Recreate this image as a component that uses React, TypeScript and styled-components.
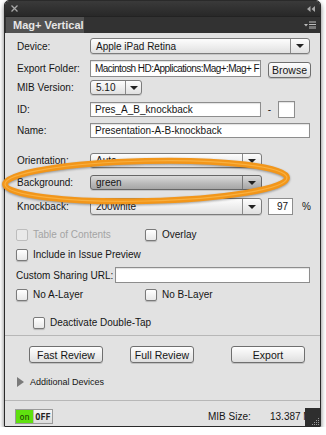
import React from 'react';
import styled, { createGlobalStyle } from 'styled-components';

const Global = createGlobalStyle`
    html, body {
        margin: 0;
        background: #fff;
    }
    body {
        font-family: "Liberation Sans", Arial, sans-serif;
        font-size: 10px;
        color: #151515;
    }
`;

export default () => {
    return <>
        <Global />
        <Panel>
            <TitleBar>
                <svg width="7" height="7" viewBox="0 0 7 7">
                    <path d="M0.5 0.5 L6.5 6.5 M6.5 0.5 L0.5 6.5" stroke="#a8a8a8" strokeWidth="1.3" />
                </svg>
                <svg width="8" height="6" viewBox="0 0 8 6">
                    <path d="M3.5 0 L0 3 L3.5 6 Z M8 0 L4.5 3 L8 6 Z" fill="#a8a8a8" />
                </svg>
            </TitleBar>
            <TabBar>
                <Tab>Mag+ Vertical</Tab>
                <svg width="12" height="8" viewBox="0 0 12 8">
                    <path d="M0 3 L4 3 L2 5.5 Z" fill="#bdbdbd" />
                    <path d="M5 1 H12 M5 3.5 H12 M5 6 H12 M5 8 H12" stroke="#bdbdbd" strokeWidth="1" />
                </svg>
            </TabBar>

            <Body>
                <Row $mt={0} $h={16}>
                    <Label>Device:</Label>
                    <Select value="Apple iPad Retina" />
                </Row>
                <Row $mt={4} $h={20}>
                    <Label>Export Folder:</Label>
                    <Inline>
                        <Field $w={171} $h={17} $tight>Macintosh HD:Applications:Mag+:Mag+ F</Field>
                        <Button $w={43} $self="flex-end" $push={7}>Browse</Button>
                    </Inline>
                </Row>
                <Row $mt={2} $h={15}>
                    <Label>MIB Version:</Label>
                    <Select value="5.10" width={52} arrow={15} />
                </Row>
                <Row $mt={6} $h={17}>
                    <Label>ID:</Label>
                    <Inline>
                        <Field $w={171} $h={15}>Pres_A_B_knockback</Field>
                        <Dash>-</Dash>
                        <Field $w={17} $h={17} />
                    </Inline>
                </Row>
                <Row $mt={4} $h={16}>
                    <Label>Name:</Label>
                    <Field $h={15}>Presentation-A-B-knockback</Field>
                </Row>

                <Row $mt={15} $h={15}>
                    <Label>Orientation:</Label>
                    <Select value="Auto" width={172} />
                </Row>
                <Row $mt={7} $h={15}>
                    <Label>Background:</Label>
                    <Select value="green" width={172} active />
                </Row>
                <Row $mt={8} $h={15}>
                    <Label>Knockback:</Label>
                    <Inline>
                        <Select value="200white" width={172} />
                        <Percent>97</Percent>
                        <Unit>%</Unit>
                    </Inline>
                </Row>

                <CheckRow $mt={15}>
                    <Check label="Table of Contents" disabled />
                    <Check label="Overlay" />
                </CheckRow>
                <CheckRow $mt={7}>
                    <Check label="Include in Issue Preview" />
                </CheckRow>
                <UrlRow>
                    <span>Custom Sharing URL:</span>
                    <Field $h={16} />
                </UrlRow>
                <CheckRow $mt={5}>
                    <Check label="No A-Layer" />
                    <Check label="No B-Layer" />
                </CheckRow>
                <CheckRow $mt={15} $indent={17}>
                    <Check label="Deactivate Double-Tap" />
                </CheckRow>

                <Divider $mt={6} />

                <ButtonRow>
                    <Button $w={74} $h={17}>Fast Review</Button>
                    <Button $w={64} $h={17}>Full Review</Button>
                    <Button $w={74} $h={17} $push={10}>Export</Button>
                </ButtonRow>

                <Disclosure>
                    <Triangle />
                    Additional Devices
                </Disclosure>

                <Divider $mt={11} />

                <Footer>
                    <Toggle>
                        <On>on</On>
                        <Off>OFF</Off>
                    </Toggle>
                    <span />
                    <span>MIB Size:</span>
                    <SizeValue>13.387 MB</SizeValue>
                </Footer>
            </Body>

            <Grip>
                <svg width="10" height="10" viewBox="0 0 10 10">
                    {[[8, 2], [6, 4], [8, 4], [4, 6], [6, 6], [8, 6], [2, 8], [4, 8], [6, 8], [8, 8]].map(([x, y]) =>
                        <rect key={`${x}-${y}`} x={x} y={y} width="1" height="1" fill="#9a9a9a" />
                    )}
                </svg>
            </Grip>

            <Highlight viewBox="0 0 326 435">
                <ellipse cx="146" cy="181" rx="141" ry="20" transform="rotate(-1.3 146 181)"
                    fill="none" stroke="#f2961a" strokeWidth="6" />
                <ellipse cx="146" cy="181" rx="141" ry="20" transform="rotate(-1.3 146 181)"
                    fill="none" stroke="#f8b040" strokeWidth="1.2" />
            </Highlight>
        </Panel>
    </>;
}

const Select = ({ value, width, arrow = 18, active = false }:
    { value: string; width?: number; arrow?: number; active?: boolean }) =>
    <SelectBox $w={width} $active={active}>
        <SelectValue>{value}</SelectValue>
        <SelectArrow $w={arrow} $active={active}><Caret /></SelectArrow>
    </SelectBox>;

const Check = ({ label, disabled = false }: { label: string; disabled?: boolean }) =>
    <CheckItem $disabled={disabled}>
        <Box $disabled={disabled} />
        {label}
    </CheckItem>;

const Panel = styled.div`
    position: relative;
    margin-left: 4px;
    width: 317px;
    height: 427px;
    box-sizing: border-box;
    border: 1px solid #2a2a2a;
    border-radius: 5px 5px 1px 1px;
    box-shadow: 0 3px 5px rgba(0, 0, 0, 0.55);
    display: flex;
    flex-direction: column;
    background: #e2e2e2;
`;

const TitleBar = styled.div`
    height: 15px;
    display: flex;
    align-items: center;
    justify-content: space-between;
    padding: 0 5px 0 6px;
    background: linear-gradient(#3a3a3a, #282828);
    border-radius: 4px 4px 0 0;
`;

const TabBar = styled.div`
    height: 16px;
    display: flex;
    align-items: stretch;
    justify-content: space-between;
    padding: 0 4px 0 1px;
    background: #323232;
    border-top: 1px solid #222;

    svg {
        align-self: center;
    }
`;

const Tab = styled.div`
    width: 78px;
    display: flex;
    align-items: center;
    padding-left: 7px;
    box-sizing: border-box;
    background: #525252;
    color: #e6e6e6;
    font-size: 11px;
    font-weight: bold;
`;

const Body = styled.div`
    flex: 1;
    display: flex;
    flex-direction: column;
    padding: 5px 10px 0 12px;
`;

const Row = styled.div<{ $mt: number; $h: number }>`
    display: grid;
    grid-template-columns: 73px 1fr;
    align-items: center;
    margin-top: ${p => p.$mt}px;
    height: ${p => p.$h}px;
`;

const Label = styled.span`
    color: #151515;
`;

const Inline = styled.div`
    display: flex;
    align-items: center;
    height: 100%;
`;

const SelectBox = styled.div<{ $w?: number; $active: boolean }>`
    display: flex;
    height: 100%;
    box-sizing: border-box;
    width: ${p => p.$w ? `${p.$w}px` : '100%'};
    border: 1px solid ${p => p.$active ? '#666' : '#7c7c7c'};
    border-radius: 3px;
    background: ${p => p.$active
        ? 'linear-gradient(#dadada, #b8b8b8 60%, #a6a6a6)'
        : 'linear-gradient(#fdfdfd, #ececec 60%, #e0e0e0)'};
    box-shadow: 0 1px 0 rgba(0, 0, 0, 0.12);
`;

const SelectValue = styled.span`
    flex: 1;
    padding-left: 5px;
    display: flex;
    align-items: center;
    white-space: nowrap;
    overflow: hidden;
`;

const SelectArrow = styled.span<{ $w: number; $active: boolean }>`
    width: ${p => p.$w}px;
    border-left: 1px solid ${p => p.$active ? '#777' : '#8a8a8a'};
    display: flex;
    align-items: center;
    justify-content: center;
`;

const Caret = styled.span`
    width: 0;
    height: 0;
    border-left: 4px solid transparent;
    border-right: 4px solid transparent;
    border-top: 4px solid #222;
`;

const Field = styled.div<{ $w?: number; $h: number; $tight?: boolean }>`
    box-sizing: border-box;
    width: ${p => p.$w ? `${p.$w}px` : '100%'};
    height: ${p => p.$h}px;
    flex-shrink: 0;
    background: #fff;
    border: 1px solid #8d8d8d;
    box-shadow: inset 0 1px 1px rgba(0, 0, 0, 0.12);
    padding-left: 4px;
    display: flex;
    align-items: center;
    white-space: nowrap;
    overflow: hidden;
    letter-spacing: ${p => p.$tight ? '-0.55px' : 'normal'};
`;

const Button = styled.div<{ $w: number; $h?: number; $self?: string; $push?: number }>`
    box-sizing: border-box;
    width: ${p => p.$w}px;
    height: ${p => p.$h ?? 16}px;
    align-self: ${p => p.$self ?? 'center'};
    margin-left: ${p => p.$push ?? 0}px;
    flex-shrink: 0;
    border: 1px solid #6f6f6f;
    border-radius: 3px;
    background: linear-gradient(#fefefe, #ececec 60%, #dedede);
    box-shadow: 0 1px 0 rgba(0, 0, 0, 0.15);
    display: flex;
    align-items: center;
    justify-content: center;
    font-size: 10.5px;
`;

const Dash = styled.span`
    width: 17px;
    text-align: center;
`;

const Percent = styled.div`
    box-sizing: border-box;
    margin-left: 6px;
    width: 25px;
    height: 17px;
    flex-shrink: 0;
    background: #fff;
    border: 1px solid #8d8d8d;
    display: flex;
    align-items: center;
    justify-content: flex-end;
    padding-right: 4px;
`;

const Unit = styled.span`
    margin-left: 9px;
`;

const CheckRow = styled.div<{ $mt: number; $indent?: number }>`
    display: grid;
    grid-template-columns: 129px 1fr;
    height: 13px;
    align-items: center;
    margin: ${p => p.$mt}px 0 0 ${p => (p.$indent ?? 0) - 1}px;
`;

const CheckItem = styled.label<{ $disabled: boolean }>`
    display: flex;
    align-items: center;
    gap: 5px;
    white-space: nowrap;
    color: ${p => p.$disabled ? '#a4a4a4' : '#151515'};
`;

const Box = styled.span<{ $disabled: boolean }>`
    box-sizing: border-box;
    width: 12px;
    height: 12px;
    border: 1px solid ${p => p.$disabled ? '#bdbdbd' : '#7a7a7a'};
    border-radius: 2px;
    background: ${p => p.$disabled ? '#e9e9e9' : 'linear-gradient(#fff, #e8e8e8)'};
    box-shadow: ${p => p.$disabled ? 'none' : '0 1px 1px rgba(0, 0, 0, 0.2)'};
`;

const UrlRow = styled.div`
    display: grid;
    grid-template-columns: 99px 1fr;
    align-items: center;
    height: 16px;
    margin: 6px 0 0 -1px;
`;

const Divider = styled.div<{ $mt: number }>`
    margin: ${p => p.$mt}px -10px 0 -12px;
    height: 1px;
    background: #b7b7b7;
`;

const ButtonRow = styled.div`
    display: flex;
    gap: 27px;
    margin-top: 10px;
    padding-left: 12px;
`;

const Disclosure = styled.div`
    display: flex;
    align-items: center;
    gap: 6px;
    height: 14px;
    margin-top: 12px;
    font-size: 9px;
`;

const Triangle = styled.span`
    width: 0;
    height: 0;
    border-top: 5px solid transparent;
    border-bottom: 5px solid transparent;
    border-left: 7px solid #7a7a7a;
`;

const Footer = styled.div`
    display: grid;
    grid-template-columns: 38px 1fr 62px 40px;
    align-items: center;
    height: 15px;
    margin: 8px 0 0 -2px;
`;

const Toggle = styled.div`
    display: flex;
    height: 15px;
    box-sizing: border-box;
    border: 1px solid #9a9a9a;
    font-family: "DejaVu Sans Mono", monospace;
    font-size: 8.5px;
`;

const On = styled.span`
    width: 17px;
    background: #5fe00f;
    display: flex;
    align-items: center;
    justify-content: center;
    color: #1a3d00;
`;

const Off = styled.span`
    flex: 1;
    background: linear-gradient(#f6f6f6, #dcdcdc);
    display: flex;
    align-items: center;
    justify-content: center;
    font-weight: bold;
    color: #222;
    border-left: 1px solid #bbb;
`;

const SizeValue = styled.span`
    white-space: nowrap;
`;

const Grip = styled.div`
    position: absolute;
    right: 0;
    bottom: 0;
    width: 15px;
    height: 18px;
    background: #2e2e2e;
    display: flex;
    align-items: flex-end;
    justify-content: flex-end;
`;

const Highlight = styled.svg`
    position: absolute;
    left: -5px;
    top: -1px;
    width: 326px;
    height: 435px;
    overflow: visible;
    pointer-events: none;
    filter: drop-shadow(0 1px 1px rgba(0, 0, 0, 0.35));
`;
